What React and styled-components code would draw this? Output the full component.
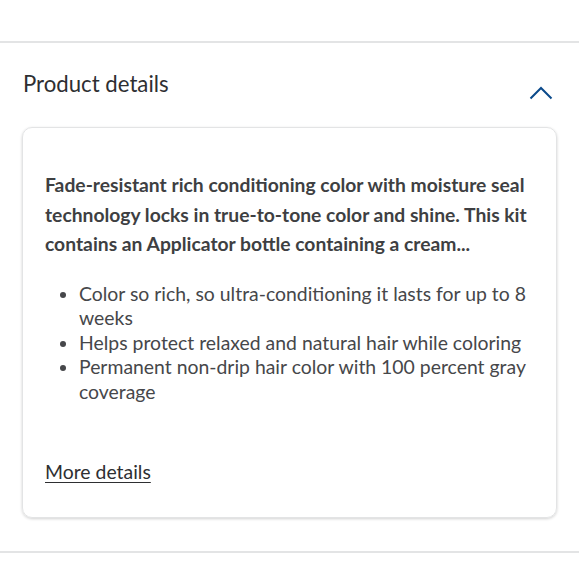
import React from 'react'
import styled, { createGlobalStyle } from 'styled-components'

const GlobalStyle = createGlobalStyle`
  body {
    margin: 0;
    background: #fff;
    font-family: Lato, "Noto Sans", sans-serif;
    color: #2e2f32;
  }
`

const Section = styled.section`
  margin-top: 41px;
  border-top: 2px solid #e3e4e5;
  border-bottom: 2px solid #e3e4e5;
  padding: 0 22px 33px 22px;
`

const Header = styled.div`
  display: flex;
  justify-content: space-between;
  align-items: flex-start;
  padding: 26px 0 0 1px;
  height: 58px;
`

const Title = styled.h2`
  margin: 0;
  font-size: 22.2px;
  font-weight: 400;
  line-height: 30px;
  color: #2e2f32;
`

const Toggle = styled.button`
  border: 0;
  background: none;
  padding: 0;
  margin: 17px 4px 0 0;
  display: flex;
  color: #0b4a8b;
`

const Card = styled.div`
  border: 1px solid #e3e4e5;
  border-radius: 10px;
  box-shadow: 0 1px 3px rgba(0, 0, 0, 0.18);
  padding: 42px 22px 33px 22px;
`

const Lead = styled.p`
  margin: 0;
  font-size: 19.3px;
  font-weight: 700;
  line-height: 29.5px;
  color: #3e3f42;
`

const List = styled.ul`
  margin: 23px 0 0 0;
  padding: 0 0 0 34px;
  font-size: 19.4px;
  line-height: 24.5px;
  color: #46474a;
`

const Item = styled.li``

const MoreLink = styled.a`
  display: inline-block;
  margin-top: 55px;
  font-size: 19.4px;
  line-height: 25px;
  color: #2e2f32;
  text-decoration: underline;
  text-underline-offset: 3px;
`

const points = [
  'Color so rich, so ultra-conditioning it lasts for up to 8 weeks',
  'Helps protect relaxed and natural hair while coloring',
  'Permanent non-drip hair color with 100 percent gray coverage',
]

const ChevronUp = () => (
  <svg width="24" height="14" viewBox="0 0 24 14" fill="none">
    <path d="M1.5 12.5 L12 2 L22.5 12.5" stroke="currentColor" strokeWidth="2" />
  </svg>
)

const App = () => (
  <>
    <GlobalStyle />
    <Section>
      <Header>
        <Title>Product details</Title>
        <Toggle aria-label="Collapse">
          <ChevronUp />
        </Toggle>
      </Header>
      <Card>
        <Lead>
          Fade-resistant rich conditioning color with moisture seal technology locks in
          true-to-tone color and shine. This kit contains an Applicator bottle containing a
          cream...
        </Lead>
        <List>
          {points.map((p, i) => (
            <Item key={i}>{p}</Item>
          ))}
        </List>
        <MoreLink href="#">More details</MoreLink>
      </Card>
    </Section>
  </>
)

export default App
